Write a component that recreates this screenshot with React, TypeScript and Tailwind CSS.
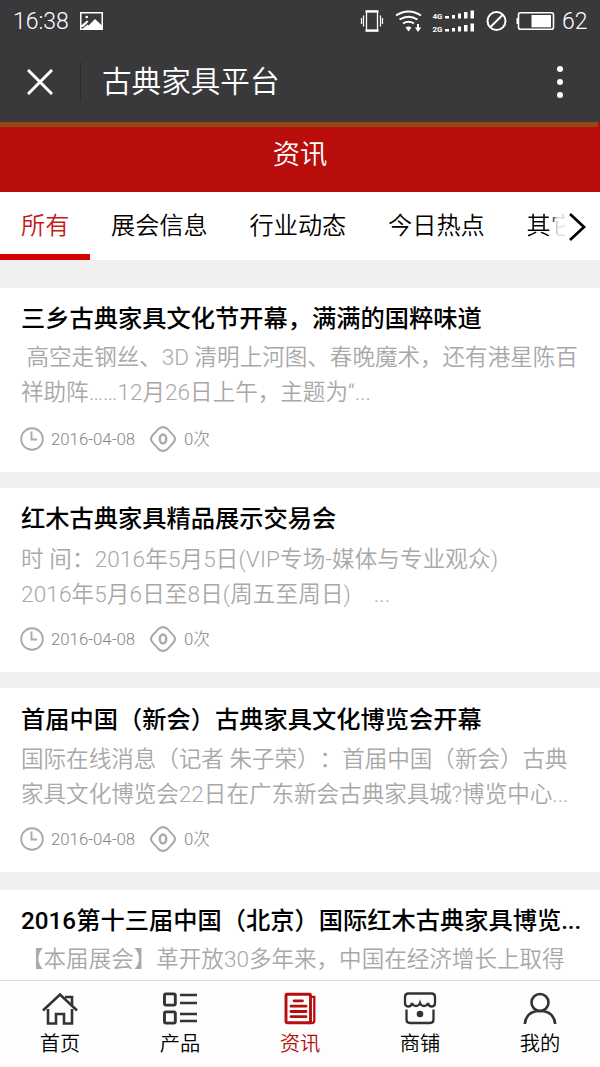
import React from "react";

type Article = {
  title: string;
  lines: string[];
  cardClass: string;
  titleClass: string;
  bodyClass: string;
};

const articles: Article[] = [
  {
    title: "三乡古典家具文化节开幕，满满的国粹味道",
    lines: ["\u00a0高空走钢丝、3D 清明上河图、春晚魔术，还有港星陈百", "祥助阵……12月26日上午，主题为“..."],
    cardClass: "h-[184px] mb-4",
    titleClass: "pt-[13px]",
    bodyClass: "pt-[3px] h-[90px]",
  },
  {
    title: "红木古典家具精品展示交易会",
    lines: ["时 间：2016年5月5日(VIP专场-媒体与专业观众)", "2016年5月6日至8日(周五至周日)\u3000..."],
    cardClass: "h-[184px] mb-4",
    titleClass: "pt-[13px]",
    bodyClass: "pt-[5px] h-[90px] tracking-[0.13px]",
  },
  {
    title: "首届中国（新会）古典家具文化博览会开幕",
    lines: ["国际在线消息（记者 朱子荣）：首届中国（新会）古典", "家具文化博览会22日在广东新会古典家具城?博览中心..."],
    cardClass: "h-[184px] mb-[18px]",
    titleClass: "pt-3.5",
    bodyClass: "pt-1 h-[89px]",
  },
  {
    title: "2016第十三届中国（北京）国际红木古典家具博览...",
    lines: ["【本届展会】革开放30多年来，中国在经济增长上取得"],
    cardClass: "h-[184px]",
    titleClass: "pt-[13px]",
    bodyClass: "pt-[3px] h-[90px]",
  },
];

function StatusBar() {
  return (
    <div className="flex h-[42px] items-center pl-[13px] pr-[9px] text-white">
      <span className="w-[67px] text-[23px] leading-none font-light">16:38</span>
      <svg width="23" height="18" viewBox="0 0 23 18" className="-mt-px">
        <path fill="white" fillRule="evenodd" d="M0 0h23v18H0zM1.5 1.5v15h20v-15z" />
        <path fill="white" d="M1 13.5l6-5 1.5 1-5 5.5H1zM6 16l9-9 7 6.5V17H2.500l5-4.500 1.500 1.500z" />
        <circle cx="6.7" cy="5" r="1.3" fill="white" />
      </svg>
      <svg width="231" height="32" viewBox="0 0 231 32" className="ml-auto" fill="none" stroke="white">
        <path strokeWidth="1.3" d="M6.5 6.5h11v19h-11z" />
        <path strokeWidth="2.2" d="M5.5 6.3h13M5.5 25.7h13" />
        <path strokeWidth="1.2" d="M3.5 10.5v11M1.5 13v6M20.5 10.5v11M22.5 13v6" />
        <path strokeWidth="2" d="M36 10.5q12.5-8 25 0M39.5 14.5q9-5.5 18 0M43 18.5q5.500-3.300 11 0" />
        <path fill="white" stroke="none" d="M45.5 22.500q3-2 6 0l-3 4z" />
        <path strokeWidth="2" d="M58 19v5" />
        <path fill="white" stroke="none" d="M55 22.500h6.200L58 27z" />
        <g fill="white" stroke="none">
          <text x="72.500" y="13.500" fontSize="8" fontWeight="700" fontFamily="Roboto, sans-serif" textLength="10" lengthAdjust="spacingAndGlyphs">4G</text>
          <text x="72.500" y="26.500" fontSize="8" fontWeight="700" fontFamily="Roboto, sans-serif" textLength="10" lengthAdjust="spacingAndGlyphs">2G</text>
          <path d="M85 11h4v2.500h-4zM92 10h3v3.500h-3zM98 8.500h3v5h-3zM104 7h3.500v6.500H104zM110.500 5.500h3.500v8h-3.500z" />
          <path d="M85 24h4v2.500h-4zM92 23h3v3.500h-3zM98 21.500h3v5h-3zM104 20h3.500v6.500H104zM110.500 18.500h3.500v8h-3.500z" />
        </g>
        <circle cx="136.500" cy="16" r="9" strokeWidth="2" />
        <path strokeWidth="2" d="M130.500 22l12-12" />
        <rect x="158.500" y="7.800" width="35" height="16.500" rx="2" strokeWidth="1.600" />
        <path strokeWidth="2" d="M157.500 13v6" />
        <path fill="white" stroke="none" d="M171.500 10h19.500v12.300h-19.500z" />
        <text x="202" y="24" fontSize="23" fontWeight="300" fontFamily="Roboto, sans-serif" fill="white" stroke="none">62</text>
      </svg>
    </div>
  );
}

function Meta() {
  return (
    <div className="flex h-6 items-center text-[16.8px] leading-6 font-light text-[#858585]">
      <svg width="24" height="24" viewBox="0 0 24 24" fill="none" stroke="#aaa" strokeWidth="1.900" className="-ml-px mr-[7px]">
        <circle cx="12" cy="12" r="10.800" />
        <path d="M11.500 4.500v8H17" />
      </svg>
      <span className="w-[99px]">2016-04-08</span>
      <svg width="26" height="26" viewBox="0 0 26 26" fill="none" stroke="#aaa" strokeWidth="2" className="mr-2">
        <path d="M8.500 2.900C11.500 0.500 14.500 0.500 17.500 2.900L23.300 9.300Q26.700 13 23.300 16.700L17.500 23.100C14.500 25.500 11.500 25.500 8.500 23.100L2.700 16.700Q-0.700 13 2.700 9.300z" />
        <ellipse cx="13" cy="13" rx="3.200" ry="4.500" strokeWidth="2.400" />
      </svg>
      <span>0次</span>
    </div>
  );
}

function Card({ article }: { article: Article }) {
  return (
    <article className={`flex shrink-0 flex-col overflow-hidden bg-white px-[21px] whitespace-nowrap ${article.cardClass}`}>
      <h2 className={`text-[24.25px] leading-9 font-medium text-black ${article.titleClass}`}>{article.title}</h2>
      <div className={`shrink-0 text-[22.55px] leading-[35px] font-[350] text-[#a8a8a8] ${article.bodyClass}`}>
        {article.lines.map((line) => (
          <p key={line}>{line}</p>
        ))}
      </div>
      <Meta />
    </article>
  );
}

const navItems = [
  {
    label: "首页",
    icon: (
      <>
        <path d="M1 18.500L18 2.500l17 16M6 17v14.500h8V22h8v9.500h8V17" />
        <path d="M23 5h7v8" />
      </>
    ),
  },
  {
    label: "产品",
    icon: (
      <>
        <rect x="2.500" y="1.900" width="10.800" height="11.200" rx="1.500" strokeWidth="2.900" />
        <rect x="2.500" y="19.900" width="10.800" height="11.200" rx="1.500" strokeWidth="2.900" />
        <path d="M18 3h17M18 11h17M18 22h17M18 29h17" />
      </>
    ),
  },
  {
    label: "资讯",
    icon: (
      <>
        <rect x="4" y="2.200" width="24.500" height="28.500" rx="1" strokeWidth="2.900" />
        <path d="M30 4.800h2.300v24q0 2.200-2.300 2.200h-4" strokeWidth="2.300" />
        <path d="M12 8.800h8.500M9 14.200h15M9 19.500h15M9 24.700h15" strokeWidth="2.800" strokeLinecap="round" />
      </>
    ),
  },
  {
    label: "商铺",
    icon: (
      <>
        <path d="M6.500 1.500h23q3.500 0 3.500 3.500v6q0 3.500-3 3.500-3.500 0-4-3.500-1 3-4 3t-4-3q-1 3-4 3t-4-3q-.500 3.500-4 3.500-3 0-3-3.500V5q0-3.500 3.500-3.500z" strokeWidth="2.300" />
        <path d="M4.500 17.500v10q0 3.500 3.500 3.500h20q3.500 0 3.500-3.500v-10" strokeWidth="2.300" />
        <circle cx="18" cy="22" r="3.300" fill="currentColor" stroke="none" />
      </>
    ),
  },
  {
    label: "我的",
    icon: (
      <>
        <circle cx="18" cy="10.500" r="8.500" />
        <path d="M2.800 32Q4 19 18 19t15.200 13" />
      </>
    ),
  },
];

export default function App() {
  return (
    <div className="flex h-[1067px] w-[600px] flex-col overflow-hidden bg-[#f0f0f0] font-['Roboto','Noto_Sans_CJK_SC',sans-serif] [text-spacing-trim:space-all]">
      <header className="h-[122px] shrink-0 bg-[#39393c]">
        <StatusBar />
        <div className="flex h-20 items-center pl-[27px] pr-[37px] text-white">
          <svg width="26" height="26" viewBox="0 0 26 26" stroke="white" strokeWidth="3">
            <path d="M1 1l24 24M25 1L1 25" />
          </svg>
          <span className="mr-[21px] ml-[27px] h-10 w-px bg-[#2a2a2c]" />
          <h1 className="text-[29.6px] leading-10 font-[350]">古典家具平台</h1>
          <span className="ml-auto flex flex-col gap-[7px]">
            <i className="h-1.5 w-1.5 rounded-full bg-white" />
            <i className="h-1.5 w-1.5 rounded-full bg-white" />
            <i className="h-1.5 w-1.5 rounded-full bg-white" />
          </span>
        </div>
      </header>
      <div className="h-[70px] shrink-0 bg-[#b80d0b] text-center text-white">
        <div className="h-[5px] w-[598px] bg-[#914815]" />
        <div className="text-[27.3px] leading-[57px] font-[350]">资讯</div>
      </div>
      <nav className="mb-7 flex h-[68px] shrink-0 text-[24.2px] leading-[68px] font-[350] whitespace-nowrap text-black">
        <div className="w-[90px] border-b-[6px] border-[#d40000] bg-white pl-[21px] text-[#c51a18]">所有</div>
        <div className="flex w-[510px] bg-white pl-[21px]">
          <span className="w-[138.5px]">展会信息</span>
          <span className="w-[138.5px]">行业动态</span>
          <span className="w-[138.5px]">今日热点</span>
          <span className="w-[38px] overflow-hidden bg-gradient-to-r from-black from-60% to-[#ddd] to-80% bg-clip-text text-transparent">其它</span>
          <svg width="18" height="30" viewBox="0 0 18 30" fill="none" stroke="black" strokeWidth="2.700" className="mt-5 ml-[3px]">
            <path d="M2 2l14 13L2 28" />
          </svg>
        </div>
      </nav>
      <main className="flex min-h-0 flex-1 flex-col overflow-hidden">
        {articles.map((article) => (
          <Card key={article.title} article={article} />
        ))}
      </main>
      <footer className="grid h-[87px] shrink-0 grid-cols-5 border-t border-[#dedede] bg-[#fdfdfd]">
        {navItems.map((item) => (
          <div key={item.label} className={`flex flex-col items-center pt-[11px] ${item.label === "资讯" ? "text-[#b40f0f]" : "text-[#333]"}`}>
            <svg width="36" height="34" viewBox="0 0 36 34" fill="none" stroke="currentColor" strokeWidth="2.600">
              {item.icon}
            </svg>
            <span className={`pt-0.5 text-[20.3px] leading-8 font-[350] ${item.label === "资讯" ? "" : "text-black"}`}>{item.label}</span>
          </div>
        ))}
      </footer>
    </div>
  );
}
